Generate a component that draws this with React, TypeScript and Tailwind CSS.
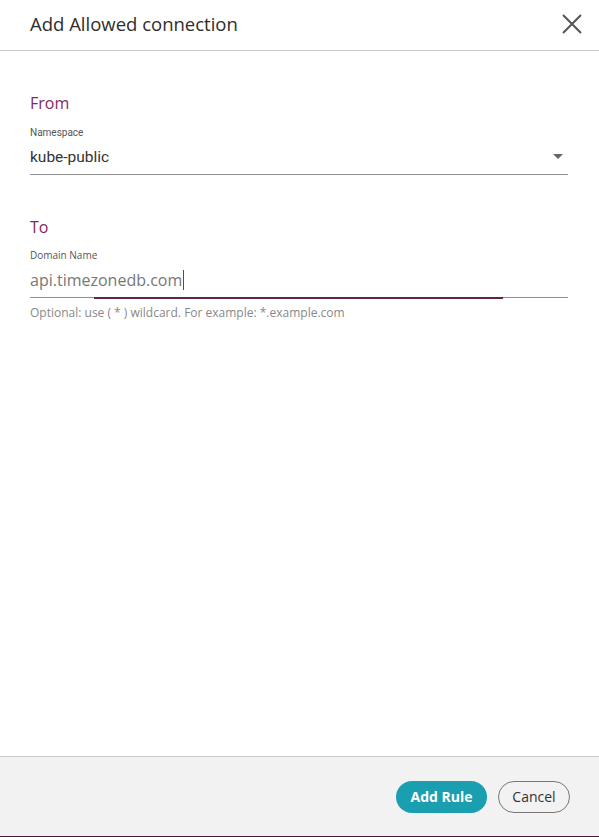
import React from "react";

export default function App() {
  return (
    <div className="h-[837px] w-[599px] flex flex-col bg-white" style={{ fontFamily: '"Open Sans", sans-serif' }}>
      <div className="h-[51px] flex items-center justify-between pl-[30px] pr-[16px] border-b border-[#cccccc]">
        <h1 className="text-[18.5px] text-[#2e2e2e] leading-none mt-[-2px]">Add Allowed connection</h1>
        <svg width="22" height="22" viewBox="0 0 22 22" className="mt-[-2px]">
          <path d="M2 2 L20 20 M20 2 L2 20" stroke="#555555" strokeWidth="2" />
        </svg>
      </div>
      <div className="flex-1 px-[30px] pr-[31px]">
        <div className="mt-[44px] text-[16px] text-[#7f2b5f] leading-none">From</div>
        <div className="mt-[17px] text-[10px] text-[#555555] leading-none" style={{ fontFamily: "Roboto, sans-serif" }}>Namespace</div>
        <div className="mt-[8px] h-[29px] flex items-center justify-between border-b border-[#8f8f8f]">
          <span className="text-[15.5px] text-[#333333] mt-[-4px]" style={{ fontFamily: "Roboto, sans-serif" }}>kube-public</span>
          <svg width="10" height="6" viewBox="0 0 10 6" className="mr-[5px] mt-[-6px]">
            <path d="M0 0 L10 0 L5 5 Z" fill="#666666" />
          </svg>
        </div>
        <div className="mt-[44px] text-[16px] text-[#7f2b5f] leading-none">To</div>
        <div className="mt-[15px] text-[10px] text-[#555555] leading-none">Domain Name</div>
        <div className="relative mt-[7px] h-[31px] flex items-center border-b border-[#8f8f8f]">
          <span className="text-[16px] text-[#777777] mt-[-4px]">api.timezonedb.com</span>
          <span className="w-px h-[20px] bg-[#3b4a9c] ml-[1px] mt-[-4px]" />
          <div className="absolute left-[64px] w-[409px] bottom-[-2px] h-[2px] bg-[#5e2549]" />
        </div>
        <div className="mt-[9px] text-[12px] text-[#888888] leading-none">Optional: use ( * ) wildcard. For example: *.example.com</div>
      </div>
      <div className="h-[81px] bg-[#f2f2f2] border-t border-[#cccccc] border-b border-b-[#4a1a3a] flex items-center justify-end gap-[11px] pr-[29px]">
        <button className="h-[32px] w-[91px] rounded-full bg-[#1a9fb1] text-white text-[14px] font-bold">Add Rule</button>
        <button className="h-[32px] w-[72px] rounded-full border border-[#777777] text-[#333333] text-[14px]">Cancel</button>
      </div>
    </div>
  );
}
